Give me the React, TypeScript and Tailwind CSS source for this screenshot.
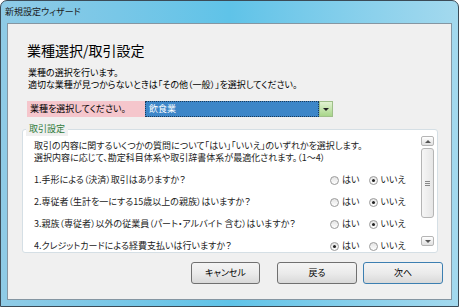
import React from "react";

const font = "font-['Noto_Sans_CJK_JP','Noto_Sans',sans-serif] [font-feature-settings:'palt']";

const questions = [
  { text: "1.手形による（決済）取引はありますか？", yes: false },
  { text: "2.専従者（生計を一にする15歳以上の親族）はいますか？", yes: false },
  { text: "3.親族（専従者）以外の従業員（パート・アルバイト 含む）はいますか？", yes: false },
  { text: "4.クレジットカードによる経費支払いは行いますか？", yes: true },
];

function Radio({ checked, label }: { checked: boolean; label: string }) {
  return (
    <div className="flex items-center gap-[3px]">
      <span className="w-[9px] h-[9px] rounded-full border border-[#9a9a9a] bg-gradient-to-b from-[#e4e4e4] to-white flex items-center justify-center">
        {checked && <span className="w-[3px] h-[3px] rounded-full bg-[#222]" />}
      </span>
      <span>{label}</span>
    </div>
  );
}

function Button({ text, primary, width }: { text: string; primary?: boolean; width: string }) {
  return (
    <button
      className={`${width} h-[22px] rounded-[3px] border ${
        primary ? "border-[#3c7fb1]" : "border-[#707070]"
      } bg-gradient-to-b from-[#f4f4f4] via-[#ebebeb] to-[#d9d9d9] text-[9px] text-black`}
    >
      {text}
    </button>
  );
}

export default function App() {
  return (
    <div className={`w-[459px] h-[307px] ${font} text-black`}>
      <div className="w-full h-full flex flex-col rounded-t-[7px] border border-[#3b4b57] bg-gradient-to-r from-[#8fcbe6] via-[#5fc3e8] to-[#a3d9ee] overflow-hidden">
        {/* title bar */}
        <div className="h-[22px] flex items-center pl-[4px] text-[9px] text-[#1b1b1b]">
          新規設定ウィザード
        </div>

        {/* client area */}
        <div className="flex-1 mx-[6px] mb-[6px] border border-[#8596a2] bg-[#f0f0f0] flex flex-col">
          <div className="pl-[19px] mt-[17px] text-[14px] leading-[18px]">業種選択/取引設定</div>

          <div className="pl-[20px] mt-[8px] text-[9px] leading-[12px]">
            <div>業種の選択を行います。</div>
            <div>適切な業種が見つからないときは「その他（一般）」を選択してください。</div>
          </div>

          {/* select row */}
          <div className="ml-[19px] mt-[10px] flex h-[16px] text-[9px]">
            <div className="w-[118px] bg-[#f5c6cc] flex items-center pl-[3px]">業種を選択してください。</div>
            <div className="w-[174px] bg-[#3d86c8] border border-dotted border-[#1a3a5a] text-white flex items-center pl-[3px]">
              飲食業
            </div>
            <div className="w-[14px] border border-[#9fbf8a] bg-gradient-to-b from-[#e2f3d2] to-[#a8d68a] flex items-center justify-center">
              <span className="w-0 h-0 border-l-[3px] border-r-[3px] border-t-[3px] border-l-transparent border-r-transparent border-t-[#222]" />
            </div>
          </div>

          {/* group box */}
          <div className="relative ml-[14px] mr-[13px] mt-[12px] h-[124px] rounded-[3px] border border-[#d5dfe5] bg-white">
            <div className="absolute -top-[8px] left-[3px] px-[3px] bg-[#f0f0f0] text-[9px] leading-[14px] text-[#2f7a3a]">
              取引設定
            </div>
            <div className="flex h-full">
              <div className="flex-1 pl-[11px] pt-[10px] text-[9px] leading-[12px] text-[#222] overflow-hidden">
                <div className="whitespace-nowrap">取引の内容に関するいくつかの質問について「はい」「いいえ」のいずれかを選択します。</div>
                <div className="whitespace-nowrap">選択内容に応じて、勘定科目体系や取引辞書体系が最適化されます。（1～4）</div>
                <div className="mt-[5px] flex flex-col">
                  {questions.map((q) => (
                    <div key={q.text} className="h-[22px] flex items-center">
                      <div className="flex-1 whitespace-nowrap overflow-hidden">{q.text}</div>
                      <div className="w-[91px] flex gap-[9px]">
                        <Radio checked={q.yes} label="はい" />
                        <Radio checked={!q.yes} label="いいえ" />
                      </div>
                    </div>
                  ))}
                </div>
              </div>
              {/* scrollbar */}
              <div className="w-[13px] mr-[3px] my-[6px] flex flex-col gap-[2px]">
                <div className="h-[10px] rounded-[2px] border border-[#b5b5b5] bg-gradient-to-b from-white to-[#e0e0e0] flex items-center justify-center">
                  <span className="w-0 h-0 border-l-[3px] border-r-[3px] border-b-[3px] border-l-transparent border-r-transparent border-b-[#555]" />
                </div>
                <div className="h-[70px] rounded-[3px] border border-[#b5b5b5] bg-gradient-to-r from-[#f6f6f6] to-[#e6e6e6] flex items-center justify-center">
                  <div className="flex flex-col gap-[1px]">
                    <span className="w-[5px] h-px bg-[#888]" />
                    <span className="w-[5px] h-px bg-[#888]" />
                    <span className="w-[5px] h-px bg-[#888]" />
                  </div>
                </div>
                <div className="flex-1" />
                <div className="h-[10px] rounded-[2px] border border-[#b5b5b5] bg-gradient-to-b from-white to-[#e0e0e0] flex items-center justify-center">
                  <span className="w-0 h-0 border-l-[3px] border-r-[3px] border-t-[3px] border-l-transparent border-r-transparent border-t-[#555]" />
                </div>
              </div>
            </div>
          </div>

          {/* buttons */}
          <div className="mt-[9px] flex justify-end pr-[8px] gap-[17px]">
            <Button text="キャンセル" width="w-[69px]" />
            <div className="flex gap-[6px]">
              <Button text="戻る" width="w-[80px]" />
              <Button text="次へ" width="w-[80px]" primary />
            </div>
          </div>
        </div>
      </div>
    </div>
  );
}
